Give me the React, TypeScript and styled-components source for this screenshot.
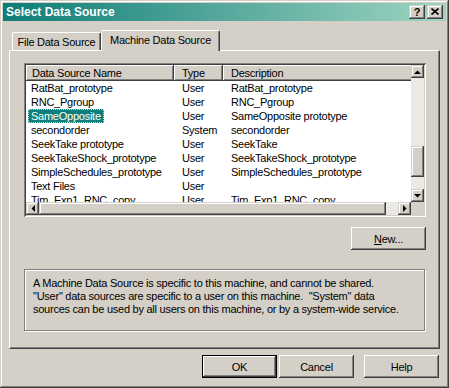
import React from "react";
import styled, { createGlobalStyle } from "styled-components";

const FACE = "#d4d0c8";
const SHADOW = "#808080";
const DARK = "#404040";
const HILITE = "#0e7f7a";

const GlobalStyle = createGlobalStyle`
  html, body {
    margin: 0;
    padding: 0;
    background: ${FACE};
    overflow: hidden;
  }
  body {
    font-family: "Liberation Sans", Arial, sans-serif;
    font-size: 11px;
    letter-spacing: -0.25px;
    color: #000;
  }
  * {
    box-sizing: border-box;
  }
`;

// classic win2k bevels
const raised = `
  background: ${FACE};
  box-shadow: inset -1px -1px ${DARK}, inset 1px 1px #fff, inset -2px -2px ${SHADOW};
`;

const raisedScroll = `
  background: ${FACE};
  box-shadow: inset -1px -1px ${DARK}, inset 1px 1px ${FACE}, inset -2px -2px ${SHADOW}, inset 2px 2px #fff;
`;

const Window = styled.div`
  width: 449px;
  height: 388px;
  padding: 3px;
  display: flex;
  flex-direction: column;
  background: ${FACE};
  box-shadow: inset -1px -1px ${DARK}, inset 1px 1px ${FACE}, inset -2px -2px ${SHADOW},
    inset 2px 2px #fff;
`;

const TitleBar = styled.div`
  height: 18px;
  flex: none;
  display: flex;
  align-items: center;
  padding: 0 3px 0 3px;
  background: linear-gradient(90deg, #0e7d77, #9fd4c2);
`;

const Title = styled.span`
  font-weight: bold;
  font-size: 12px;
  letter-spacing: 0;
  color: #fff;
`;

const CaptionButtons = styled.div`
  margin-left: auto;
  display: flex;
  gap: 2px;
`;

const CaptionButton = styled.div`
  width: 16px;
  height: 14px;
  display: flex;
  align-items: center;
  justify-content: center;
  font-weight: bold;
  font-size: 11px;
  line-height: 14px;
  padding-bottom: 1px;
  ${raisedScroll}
`;

const Body = styled.div`
  flex: 1;
  display: flex;
  flex-direction: column;
  padding: 9px 6px 0 6px;
`;

const TabRow = styled.div`
  display: flex;
  align-items: flex-end;
  height: 20px;
  padding-left: 3px;
`;

const Tab = styled.div<{ $active?: boolean; $width: number }>`
  width: ${(p) => p.$width}px;
  height: ${(p) => (p.$active ? 21 : 18)}px;
  margin-bottom: ${(p) => (p.$active ? -1 : 0)}px;
  position: relative;
  z-index: ${(p) => (p.$active ? 1 : 0)};
  background: ${FACE};
  border: 1px solid #fff;
  border-bottom: none;
  border-right-color: ${DARK};
  border-radius: 2px 2px 0 0;
  box-shadow: inset -1px 0 ${SHADOW};
  display: flex;
  align-items: center;
  justify-content: center;
  padding-bottom: ${(p) => (p.$active ? 2 : 0)}px;
  white-space: nowrap;
`;

const Panel = styled.div`
  height: 299px;
  flex: none;
  border-top: 1px solid #fff;
  border-left: 1px solid #fff;
  border-right: 1px solid ${DARK};
  border-bottom: 1px solid ${DARK};
  box-shadow: inset -1px -1px ${SHADOW};
  padding: 12px 13px 0 14px;
  display: flex;
  flex-direction: column;
`;

const ListView = styled.div`
  height: 154px;
  flex: none;
  background: #fff;
  padding: 2px;
  box-shadow: inset 1px 1px ${SHADOW}, inset -1px -1px #fff, inset 2px 2px ${DARK},
    inset -2px -2px ${FACE};
  display: grid;
  grid-template-columns: 1fr 13px;
  grid-template-rows: 1fr 13px;
`;

const ListContent = styled.div`
  overflow: hidden;
  white-space: nowrap;
`;

const HeaderRow = styled.div`
  display: flex;
  height: 16px;
`;

const HeaderCell = styled.div<{ $width: number; $pad: number }>`
  flex: none;
  width: ${(p) => p.$width}px;
  height: 16px;
  line-height: 16px;
  padding-left: ${(p) => p.$pad}px;
  ${raised}
`;

const Row = styled.div`
  display: flex;
  height: 14px;
  line-height: 14px;
`;

const Cell = styled.div<{ $width: number; $pad: number }>`
  flex: none;
  width: ${(p) => p.$width}px;
  padding-left: ${(p) => p.$pad}px;
  overflow: hidden;
`;

const Label = styled.span<{ $selected?: boolean }>`
  display: inline-block;
  height: 14px;
  padding: 0 3px 0 3px;
  background: ${(p) => (p.$selected ? HILITE : "transparent")};
  color: ${(p) => (p.$selected ? "#fff" : "#000")};
  outline: ${(p) => (p.$selected ? `1px dotted ${FACE}` : "none")};
  outline-offset: -1px;
`;

const VScroll = styled.div`
  display: flex;
  flex-direction: column;
  background: #ebe9e4;
`;

const HScroll = styled.div`
  display: flex;
  background: #ebe9e4;
`;

const ScrollBtn = styled.div`
  width: 13px;
  height: 13px;
  flex: none;
  display: flex;
  align-items: center;
  justify-content: center;
  ${raisedScroll}
`;

const Thumb = styled.div<{ $vertical?: boolean; $offset: number; $size: number }>`
  flex: none;
  ${(p) =>
    p.$vertical
      ? `height: ${p.$size}px; margin-top: ${p.$offset}px;`
      : `width: ${p.$size}px; margin-left: ${p.$offset}px;`}
  ${raisedScroll}
`;

const Filler = styled.div`
  flex: 1;
`;

const Corner = styled.div`
  background: ${FACE};
`;

const PushButton = styled.button<{ $default?: boolean }>`
  width: 75px;
  height: 23px;
  flex: none;
  border: none;
  padding: 0;
  font-family: inherit;
  font-size: 11px;
  letter-spacing: inherit;
  color: #000;
  background: ${FACE};
  box-shadow: ${(p) =>
    p.$default
      ? `inset 0 0 0 1px #000, inset -2px -2px ${DARK}, inset 2px 2px #fff, inset -3px -3px ${SHADOW}`
      : `inset -1px -1px ${DARK}, inset 1px 1px #fff, inset -2px -2px ${SHADOW}`};
`;

const NewButton = styled(PushButton)`
  align-self: flex-end;
  margin-top: 10px;
`;

const GroupBox = styled.div`
  width: 401px;
  height: 62px;
  margin-top: 19px;
  border: 1px solid ${SHADOW};
  box-shadow: inset 1px 1px #fff, 1px 1px #fff;
  padding: 7px 8px;
  line-height: 13px;
  white-space: pre;
`;

const Footer = styled.div`
  display: flex;
  justify-content: flex-end;
  margin-top: 6px;
  padding-right: 1px;
`;

const FooterButton = styled(PushButton)<{ $gap?: number }>`
  margin-left: ${(p) => p.$gap || 0}px;
`;

const Arrow = ({ dir }: { dir: "up" | "down" | "left" | "right" }) => {
  const pts = {
    up: "0,4 7,4 3.5,0.5",
    down: "0,0 7,0 3.5,3.5",
    left: "4,0 4,7 0.5,3.5",
    right: "0,0 0,7 3.5,3.5",
  }[dir];
  const vert = dir === "up" || dir === "down";
  return (
    <svg width={vert ? 7 : 4} height={vert ? 4 : 7} viewBox={vert ? "0 0 7 4" : "0 0 4 7"}>
      <polygon points={pts} fill="#000" />
    </svg>
  );
};

const rows = [
  ["RatBat_prototype", "User", "RatBat_prototype"],
  ["RNC_Pgroup", "User", "RNC_Pgroup"],
  ["SameOpposite", "User", "SameOpposite prototype"],
  ["secondorder", "System", "secondorder"],
  ["SeekTake prototype", "User", "SeekTake"],
  ["SeekTakeShock_prototype", "User", "SeekTakeShock_prototype"],
  ["SimpleSchedules_prototype", "User", "SimpleSchedules_prototype"],
  ["Text Files", "User", ""],
  ["Tim_Exp1_RNC_copy", "User", "Tim_Exp1_RNC_copy"],
];

const SELECTED = 2;

const App: React.FC = () => {
  return (
    <>
      <GlobalStyle />
      <Window>
        <TitleBar>
          <Title>Select Data Source</Title>
          <CaptionButtons>
            <CaptionButton>?</CaptionButton>
            <CaptionButton>
              <svg width="8" height="7" viewBox="0 0 8 7">
                <path d="M0.5 0.5 L7.5 6.5 M7.5 0.5 L0.5 6.5" stroke="#000" strokeWidth="1.6" />
              </svg>
            </CaptionButton>
          </CaptionButtons>
        </TitleBar>
        <Body>
          <TabRow>
            <Tab $width={89}>File Data Source</Tab>
            <Tab $width={119} $active>
              Machine Data Source
            </Tab>
          </TabRow>
          <Panel>
            <ListView>
              <ListContent>
                <HeaderRow>
                  <HeaderCell $width={148} $pad={6}>
                    Data Source Name
                  </HeaderCell>
                  <HeaderCell $width={49} $pad={8}>
                    Type
                  </HeaderCell>
                  <HeaderCell $width={260} $pad={8}>
                    Description
                  </HeaderCell>
                </HeaderRow>
                {rows.map((r, i) => (
                  <Row key={r[0]}>
                    <Cell $width={148} $pad={2}>
                      <Label $selected={i === SELECTED}>{r[0]}</Label>
                    </Cell>
                    <Cell $width={49} $pad={8}>
                      {r[1]}
                    </Cell>
                    <Cell $width={260} $pad={8}>
                      {r[2]}
                    </Cell>
                  </Row>
                ))}
              </ListContent>
              <VScroll>
                <ScrollBtn>
                  <Arrow dir="up" />
                </ScrollBtn>
                <Thumb $vertical $offset={68} $size={31} />
                <Filler />
                <ScrollBtn>
                  <Arrow dir="down" />
                </ScrollBtn>
              </VScroll>
              <HScroll>
                <ScrollBtn>
                  <Arrow dir="left" />
                </ScrollBtn>
                <Thumb $offset={0} $size={347} />
                <Filler />
                <ScrollBtn>
                  <Arrow dir="right" />
                </ScrollBtn>
              </HScroll>
              <Corner />
            </ListView>
            <NewButton>
              <u>N</u>ew...
            </NewButton>
            <GroupBox>
              {"A Machine Data Source is specific to this machine, and cannot be shared.\n" +
                "\"User\" data sources are specific to a user on this machine.  \"System\" data\n" +
                "sources can be used by all users on this machine, or by a system-wide service."}
            </GroupBox>
          </Panel>
          <Footer>
            <FooterButton $default>OK</FooterButton>
            <FooterButton $gap={2}>Cancel</FooterButton>
            <FooterButton $gap={10}>Help</FooterButton>
          </Footer>
        </Body>
      </Window>
    </>
  );
};

export default App;
